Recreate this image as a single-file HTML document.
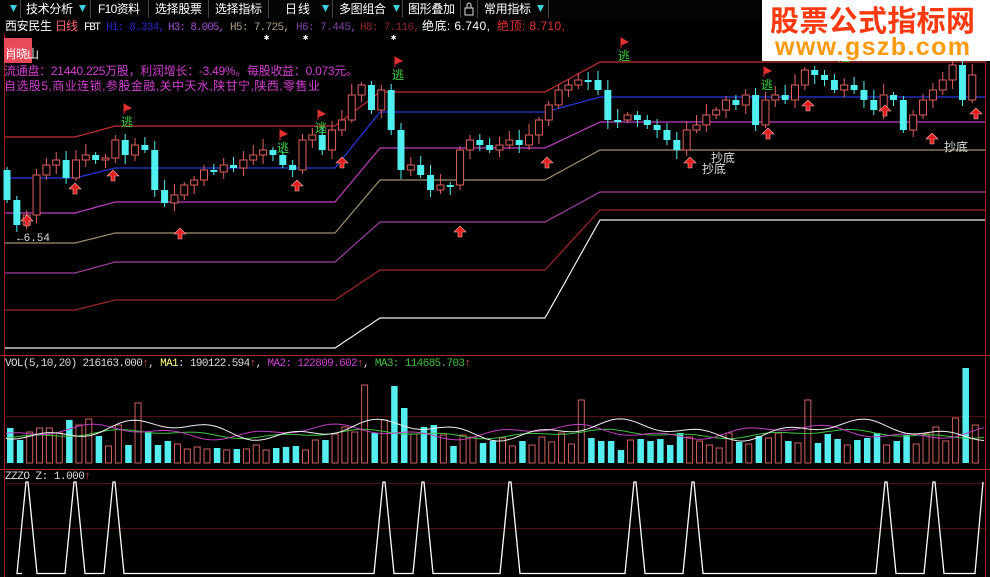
<!DOCTYPE html>
<html><head><meta charset="utf-8">
<style>
html,body{margin:0;padding:0;background:#000;width:990px;height:577px;overflow:hidden}
svg{display:block}
text{font-family:"Liberation Mono","Noto Sans CJK SC",monospace;font-size:11px}
.cj{font-family:"Liberation Sans","Noto Sans CJK SC",sans-serif;font-size:12px}
</style></head>
<body>
<svg id="svgroot" width="990" height="577" xmlns="http://www.w3.org/2000/svg">
<rect width="990" height="577" fill="#000"/>
<rect x="0" y="0" width="990" height="18" fill="#050505"/>
<g fill="#fff">
<text x="26" y="13" class="cj" textLength="47">技术分析</text>
<text x="98" y="13" class="cj" textLength="42">F10资料</text>
<text x="155" y="13" class="cj" textLength="47">选择股票</text>
<text x="215" y="13" class="cj" textLength="47">选择指标</text>
<text x="285" y="13" class="cj" textLength="25">日线</text>
<text x="339" y="13" class="cj" textLength="47">多图组合</text>
<text x="408" y="13" class="cj" textLength="47">图形叠加</text>
<text x="484" y="13" class="cj" textLength="47">常用指标</text>
</g>
<g fill="#40d0e0">
<path d="M10 5h7l-3.5 7z"/><path d="M79 5h7l-3.5 7z"/><path d="M322 5h7l-3.5 7z"/><path d="M393 5h7l-3.5 7z"/><path d="M537 5h7l-3.5 7z"/>
</g>
<g stroke="#444" stroke-width="1">
<line x1="20.5" y1="0" x2="20.5" y2="18"/><line x1="90.5" y1="0" x2="90.5" y2="18"/><line x1="148.5" y1="0" x2="148.5" y2="18"/><line x1="208.5" y1="0" x2="208.5" y2="18"/><line x1="268.5" y1="0" x2="268.5" y2="18"/><line x1="332.5" y1="0" x2="332.5" y2="18"/><line x1="402.5" y1="0" x2="402.5" y2="18"/><line x1="460.5" y1="0" x2="460.5" y2="18"/><line x1="477.5" y1="0" x2="477.5" y2="18"/><line x1="548.5" y1="0" x2="548.5" y2="18"/>
</g>
<g stroke="#ddd" fill="none"><rect x="465" y="8" width="8" height="7"/><path d="M467 8v-3a2 2 0 0 1 4 0v3"/></g>
<text x="5" y="30" fill="#fff" class="cj" textLength="47">西安民生</text>
<text x="55" y="30" fill="#ff6070" class="cj" textLength="23">日线</text>
<text x="84" y="30" fill="#fff" textLength="17">FBT</text>
<text x="106" y="30" fill="#2828c8" textLength="59">H1: 8.334,</text>
<text x="168" y="30" fill="#a050d0" textLength="57">H3: 8.005,</text>
<text x="230" y="30" fill="#b0a080" textLength="60">H5: 7.725,</text>
<text x="296" y="30" fill="#8040a0" textLength="61">H6: 7.445,</text>
<text x="360" y="30" fill="#902828" textLength="60">H8: 7.116,</text>
<text x="422" y="30" fill="#fff" class="cj" textLength="68">绝底: 6.740,</text>
<text x="497" y="30" fill="#e03030" class="cj" textLength="68">绝顶: 8.710,</text>
<g id="plot"></g>
<rect x="4" y="38" width="28" height="25" fill="#e84a5a"/>
<text x="5" y="58" fill="#fff" class="cj" textLength="34">肖晓山</text>
<text x="4" y="75" fill="#d040d0" class="cj" textLength="354">流通盘：21440.225万股，利润增长：-3.49%。每股收益：0.073元。</text>
<text x="4" y="90" fill="#d040d0" class="cj" textLength="316">自选股5,商业连锁,参股金融,关中天水,陕甘宁,陕西,零售业</text>
<text x="17" y="241" fill="#ddd">←6.54</text>
<text x="711" y="162" fill="#ddd" class="cj">抄底</text>
<text x="702" y="173" fill="#ddd" class="cj">抄底</text>
<text x="944" y="151" fill="#ddd" class="cj">抄底</text>
<text x="5" y="366" fill="#ddd" textLength="466">VOL(5,10,20) 216163.000<tspan fill="#e05050">↑</tspan>, <tspan fill="#ffff80">MA1</tspan>: 190122.594<tspan fill="#e05050">↑</tspan>, <tspan fill="#d040d0">MA2: 122809.602</tspan><tspan fill="#e05050">↑</tspan>, <tspan fill="#40c040">MA3: 114685.703</tspan><tspan fill="#e05050">↑</tspan></text>
<text x="5" y="479" fill="#ddd" textLength="86">ZZZO Z: 1.000<tspan fill="#e05050">↑</tspan></text>
<rect x="762" y="0" width="228" height="61" fill="#fff"/>
<text x="770" y="31" fill="#ff3a10" style="font-family:'Noto Sans CJK SC',sans-serif;font-weight:bold;font-size:29px" textLength="205">股票公式指标网</text>
<text x="775" y="55" fill="#ff9a10" style="font-family:'Liberation Sans',sans-serif;font-weight:bold;font-size:25px" textLength="195">www.gszb.com</text>
</svg>
<script>
(function(){
var NS="http://www.w3.org/2000/svg",P=document.getElementById("plot");
function el(t,a){var e=document.createElementNS(NS,t);for(var k in a)e.setAttribute(k,a[k]);P.appendChild(e);return e;}
el("line",{x1:4.5,y1:34,x2:4.5,y2:577,stroke:"#a02020"});
el("line",{x1:985.5,y1:34,x2:985.5,y2:577,stroke:"#a02020"});
[355,469].forEach(function(y){el("line",{x1:0,y1:y+.5,x2:990,y2:y+.5,stroke:"#b02828"});});
[416,483,528].forEach(function(y){el("line",{x1:4,y1:y+.5,x2:985,y2:y+.5,stroke:"#501010"});});
function st(x,a,b){return x<=a?0:x>=b?1:(x-a)/(b-a);}
var L=[["#c03030",137,11,34,30],["#2838e0",178,10,56,15],["#c040c0",213,11,54,26],["#a09070",243,10,53,30],["#a040a0",273,11,40,30],["#a02828",310,10,30,60],["#f0f0f0",348,0,30,98]];
L.forEach(function(l){var d="";for(var x=5;x<=985;x+=5){var y=l[1]-l[2]*st(x,75,115)-l[3]*st(x,335,380)-l[4]*st(x,545,600);d+=(x==5?"M":"L")+x+" "+y.toFixed(1);}el("path",{d:d,stroke:l[0],fill:"none","stroke-width":1.2});});
var C=[200,225,215,175,165,160,178,160,155,160,158,140,155,145,150,190,203,195,185,180,170,172,165,168,160,155,150,155,165,170,140,135,150,130,120,95,85,110,90,130,170,165,175,190,185,185,150,140,145,150,145,140,145,135,120,105,90,85,80,80,90,120,120,115,120,125,130,140,150,130,125,115,110,100,105,95,125,100,95,100,85,70,75,80,90,85,90,100,110,95,100,130,115,100,90,80,65,100,75,80];
var ups=[], prev=170;
for(var i=0;i<99;i++){var x=7+i*9.85,c=C[i],o=prev,up=c<o;if(Math.abs(c-o)<2){o=c+2;}
 var tp=Math.min(o,c),bt=Math.max(o,c),h=((i*37)%9)+3;
 var col=up?"#e06060":"#50f0f0";
 el("line",{x1:x,y1:tp-h,x2:x,y2:bt+((i*53)%7)+3,stroke:col});
 if(up)el("rect",{x:x-3.5,y:tp,width:7,height:Math.max(bt-tp,1),fill:"#000",stroke:col});
 else el("rect",{x:x-3.5,y:tp,width:7,height:Math.max(bt-tp,1),fill:col});
 ups.push(up);prev=c;}
[27,75,113,180,297,342,460,547,690,768,808,885,932,976].forEach(function(x,i){var y=[215,183,170,228,180,157,226,157,157,128,100,105,133,108][i];
 el("path",{d:"M"+x+" "+y+"l-6 6h4v5h4v-5h4z",fill:"#e02020",stroke:"#ffb0b0","stroke-width":.6});});
[[124,112],[280,138],[318,118],[395,65],[621,46],[764,75],[841,47]].forEach(function(p){
 el("path",{d:"M"+p[0]+" "+(p[1]-8)+"v10M"+p[0]+" "+(p[1]-8)+"l7 4-7 3z",fill:"#e03030",stroke:"#e03030"});
 var t=el("text",{x:p[0]-3,y:p[1]+14,fill:"#40d040","class":"cj"});t.textContent="逃";});
[268,307,395].forEach(function(x){var t=el("text",{x:x-4,y:40,fill:"#fff"});t.textContent="✱";t.setAttribute("style","font-size:9px");});
var VH=[35,23,31,35,35,30,43,38,44,27,17,38,18,60,31,18,22,19,14,16,14,15,13,14,14,18,13,15,16,17,13,23,23,29,36,31,26,30,43,38,55,29,36,38,28,17,28,26,20,22,25,17,22,18,26,21,30,19,63,25,22,22,13,23,24,22,24,18,30,26,22,18,15,30,21,19,27,25,30,22,20,63,20,29,24,18,23,25,30,18,22,28,19,29,36,22,45,95,38];
for(var i=0;i<99;i++){var x=10+i*9.85,h=VH[i];if(i==36)h=78;if(i==39)h=77;
 if(ups[i])el("rect",{x:x-3,y:463-h,width:6,height:h,fill:"none",stroke:"#d06060"});
 else el("rect",{x:x-3,y:463-h,width:6.5,height:h,fill:"#54eef0"});}
function wave(col,base,amp,ph){var d="";for(var x=6;x<=985;x+=6){var y=base+amp*Math.sin(x/37+ph)+amp*0.6*Math.sin(x/13+ph*2);d+=(x==6?"M":"L")+x+" "+y.toFixed(1);}el("path",{d:d,stroke:col,fill:"none"});}
wave("#40c040",434,3,1);wave("#c040c0",432,5,2);wave("#f0f0f0",430,7,0.5);
var SP=[27,75,114,384,423,510,635,693,886,934];var d="M22 573.5";
SP.forEach(function(x){d+="L"+(x-10)+" 573.5L"+(x-1)+" 482L"+(x+1)+" 482L"+(x+10)+" 573.5";});
d+="L975 573.5L983 482";
el("path",{d:d,stroke:"#fff",fill:"none","stroke-width":1.3});
})();
</script>
</body></html>
